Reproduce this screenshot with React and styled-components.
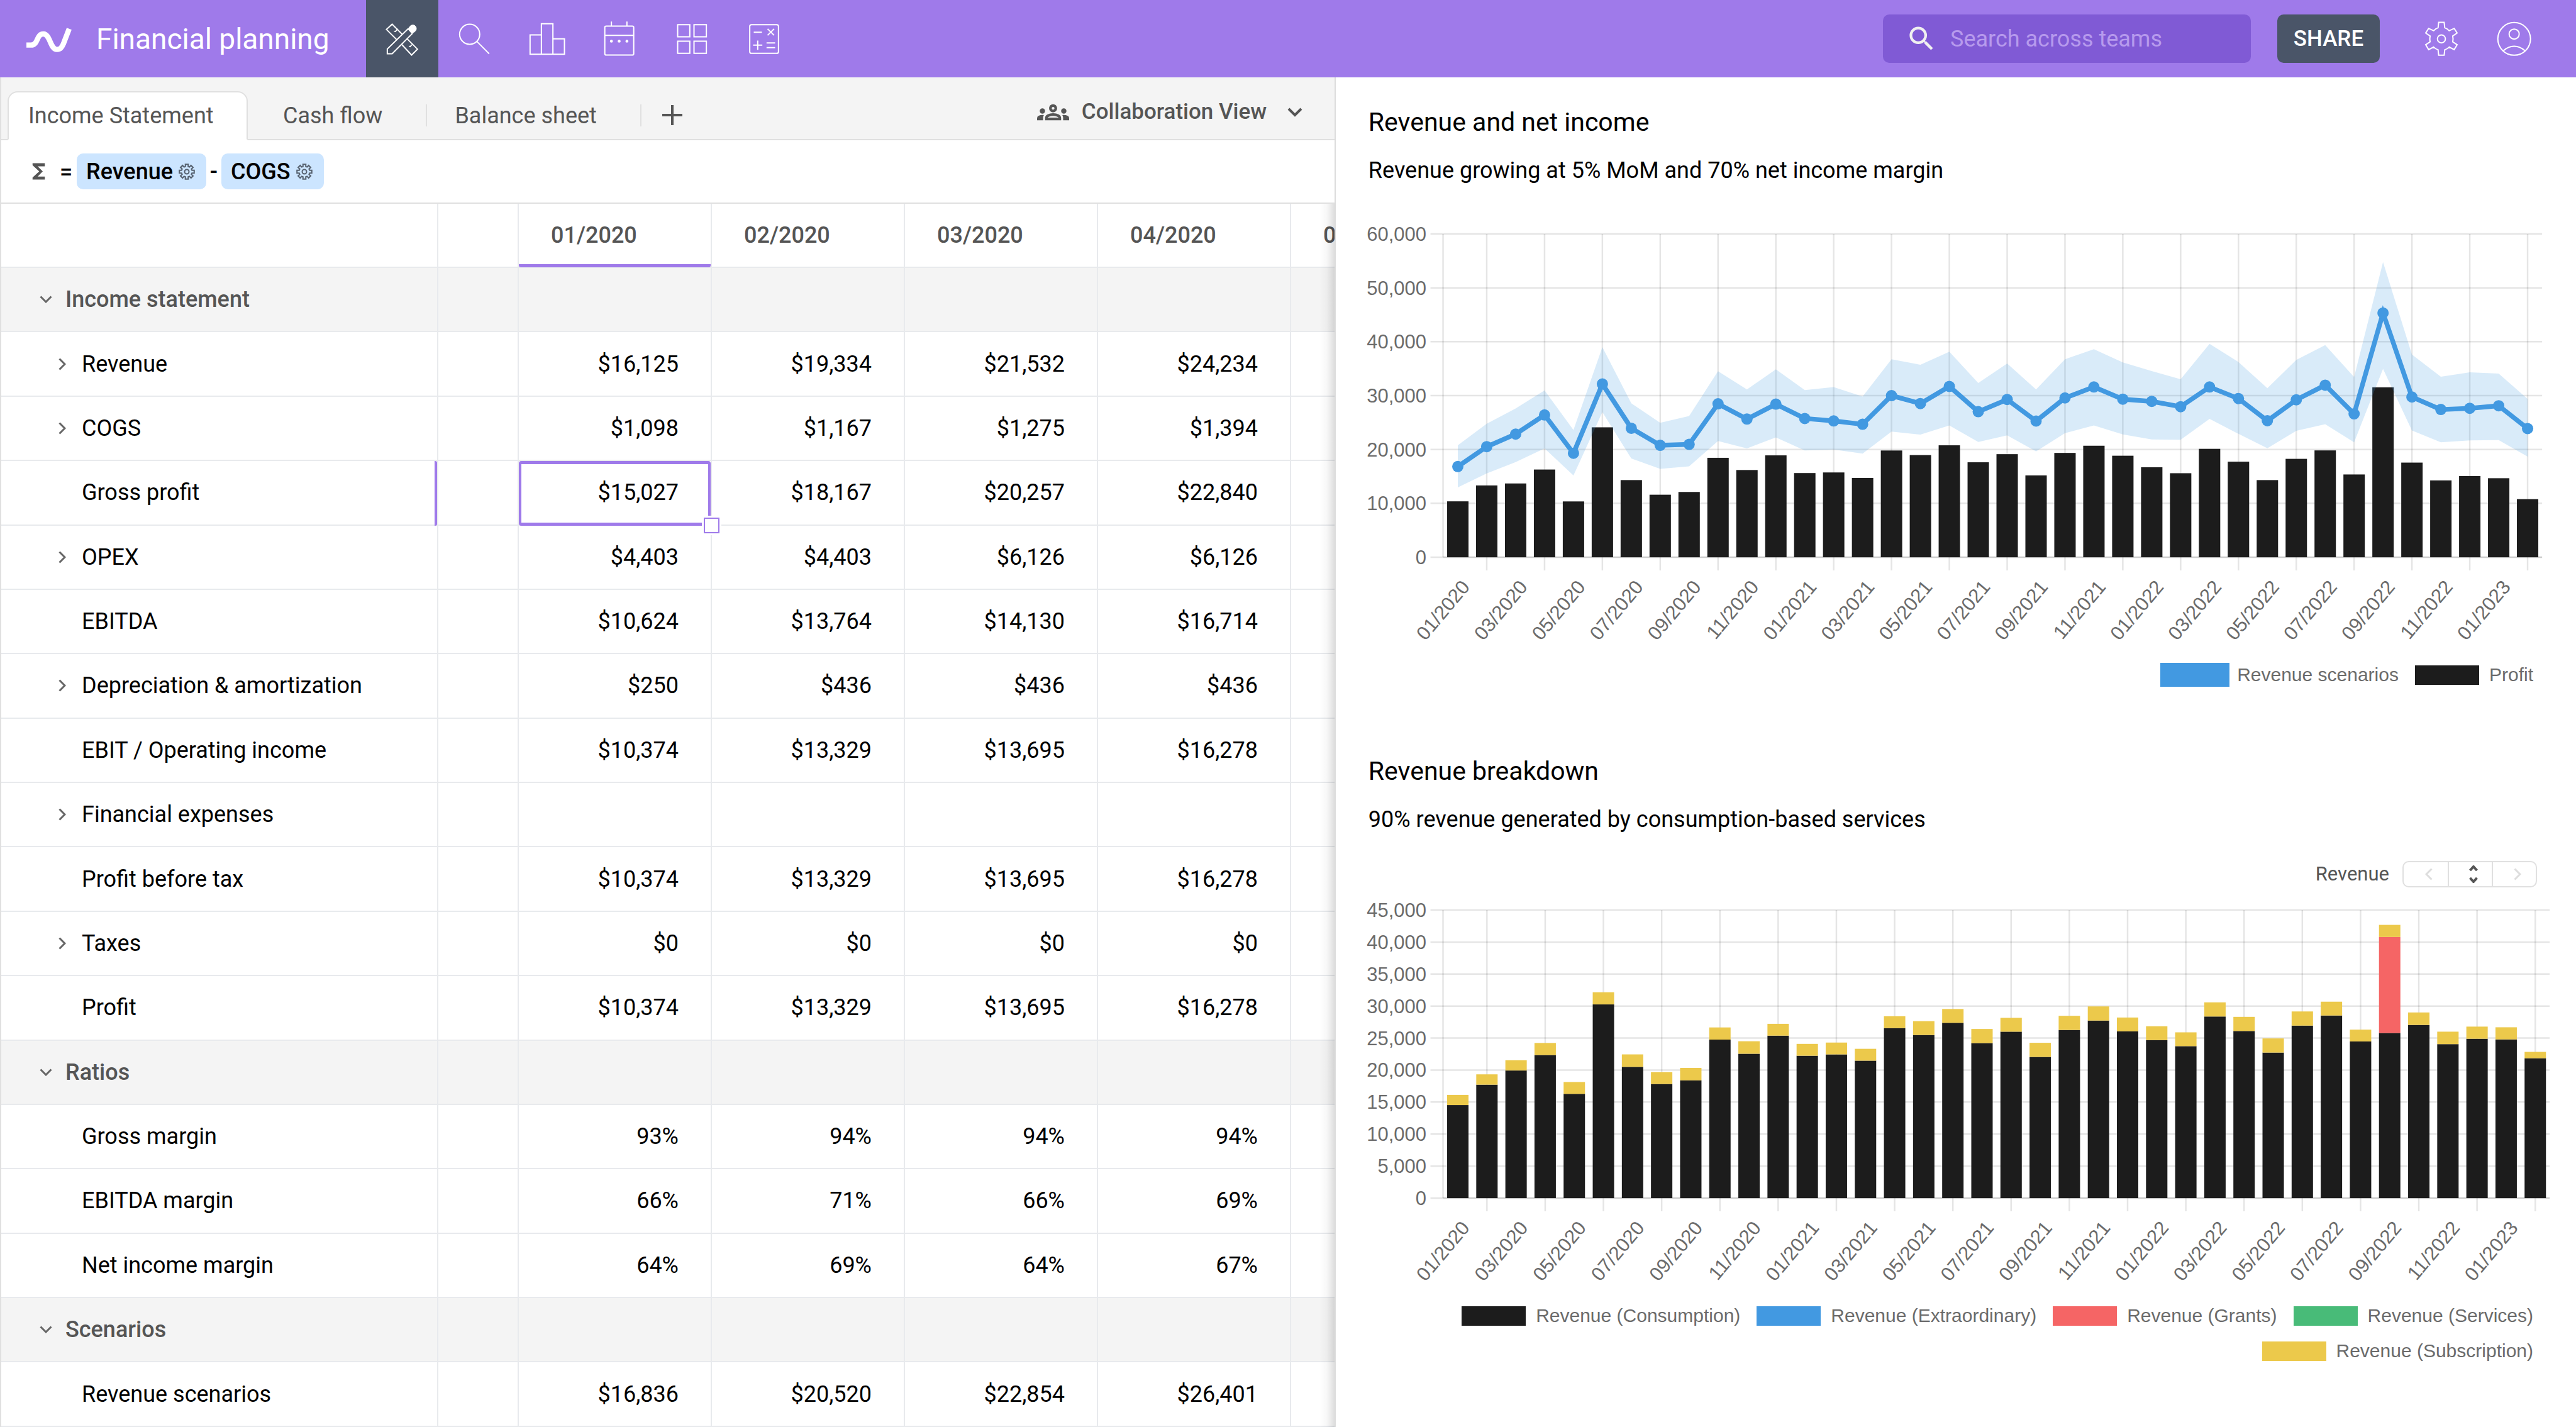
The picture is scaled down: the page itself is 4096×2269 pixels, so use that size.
import React, { useState } from "react";
import styled, { createGlobalStyle, css } from "styled-components";
import { MdFunctions, MdOutlineGroups, MdSearch } from "react-icons/md";

const color = {
  purple: "#9f7aea",
  purpleDark: "#805ad5",
  slate: "#4a5568",
  surface: "#f4f4f4",
  line: "#e0e0e0",
  cellLine: "#e8eaed",
  muted: "#555555",
  chip: "#cce5ff",
  blue: "#4299e1",
  black: "#1c1c1c",
  red: "#f56565",
  green: "#48bb78",
  yellow: "#ecc94b",
  axis: "#6b6b6b",
};

const GlobalStyle = createGlobalStyle`
  *, *::before, *::after { box-sizing: border-box; }
  body { margin: 0; background: #ffffff; }
  button, input, select { font: inherit; color: inherit; border: 0; background: none; padding: 0; margin: 0; }
  button { cursor: pointer; }
  svg { display: block; flex: none; }
`;

/* ---------- page frame ---------- */

const Page = styled.div`
  display: flex;
  flex-direction: column;
  height: 100vh;
  overflow: hidden;
  font-family: Roboto, "Liberation Sans", sans-serif;
  font-size: 36px;
  line-height: 48px;
  color: #000000;
`;

const Columns = styled.main`
  display: grid;
  grid-template-columns: minmax(0, 14fr) minmax(0, 13fr);
  flex: 1;
  min-height: 0;
`;

/* ---------- top bar ---------- */

const TopBar = styled.header`
  display: flex;
  align-items: stretch;
  height: 123px;
  flex: none;
  padding-left: 41px;
  background: ${color.purple};
  color: #ffffff;
`;

const Brand = styled.h1`
  display: flex;
  align-items: center;
  gap: 35px;
  width: 541px;
  margin: 0;
  font-size: 46px;
  font-weight: 400;
  white-space: nowrap;
`;

const Nav = styled.nav`
  display: flex;
`;

const NavButton = styled.button`
  display: flex;
  align-items: center;
  justify-content: center;
  width: 115px;
  background: ${(p) => (p.$active ? color.slate : "transparent")};
`;

const Actions = styled.div`
  display: flex;
  align-items: center;
  margin-left: auto;
  padding-right: 40px;
`;

const SearchBox = styled.label`
  display: flex;
  align-items: center;
  gap: 20px;
  width: 585px;
  height: 77px;
  padding: 0 36px;
  border-radius: 10px;
  background: ${color.purpleDark};
`;

const SearchInput = styled.input`
  flex: 1;
  min-width: 0;
  font-size: 36px;
  outline: 0;
  &::placeholder {
    color: #b79aed;
    opacity: 1;
  }
`;

const ShareButton = styled.button`
  height: 77px;
  width: 163px;
  margin: 0 40px 0 42px;
  border-radius: 10px;
  background: ${color.slate};
  font-size: 35px;
  font-weight: 500;
`;

const IconButton = styled.button`
  display: flex;
  align-items: center;
  justify-content: center;
  width: 116px;
  height: 77px;
`;

/* ---------- sheet panel ---------- */

const Sheet = styled.section`
  display: flex;
  flex-direction: column;
  min-width: 0;
  min-height: 0;
  border-left: 2px solid ${color.line};
  border-right: 2px solid #dcdcdc;
`;

const TabBar = styled.div`
  display: flex;
  align-items: flex-end;
  height: 100px;
  flex: none;
  padding: 0 51px 0 10px;
  border-bottom: 2px solid ${color.line};
  background: ${color.surface};
  color: ${color.muted};
`;

const Tabs = styled.div`
  display: flex;
`;

const Tab = styled.button`
  height: 76px;
  white-space: nowrap;
  ${(p) =>
    p.$active
      ? css`
          width: 382px;
          height: 78px;
          margin: 0 12px -2px 0;
          padding: 0 0 0 31px;
          text-align: left;
          border: 2px solid ${color.line};
          border-bottom-color: #ffffff;
          border-radius: 16px 16px 0 0;
          background: #ffffff;
        `
      : css`
          padding: 2px 71px 0 44px;
          background: linear-gradient(${color.line}, ${color.line}) right center / 2px 35px no-repeat;
        `}
`;

const AddTab = styled.button`
  display: flex;
  align-items: center;
  justify-content: center;
  width: 98px;
  height: 76px;
`;

const ViewPicker = styled.label`
  display: flex;
  align-items: center;
  height: 86px;
  margin-left: auto;
  gap: 20px;
`;

const ViewSelect = styled.select`
  appearance: none;
  outline: 0;
  font-size: 35px;
  font-weight: 500;
  padding-right: 12px;
`;

const FormulaBar = styled.div`
  display: flex;
  align-items: center;
  height: 101px;
  flex: none;
  padding-left: 40px;
  border-bottom: 2px solid ${color.line};
  font-weight: 500;
`;

const Sigma = styled.span`
  display: flex;
  width: 53px;
  color: ${color.muted};
`;

const Operator = styled.span`
  width: ${(p) => (p.$wide ? 27 : 24)}px;
  text-align: ${(p) => (p.$wide ? "left" : "center")};
`;

const Chip = styled.button`
  display: flex;
  align-items: center;
  gap: 9px;
  height: 57px;
  padding: 0 18px 0 15px;
  border-radius: 10px;
  background: ${color.chip};
  font-weight: 500;
`;

const TableArea = styled.div`
  position: relative;
  flex: 1;
  min-height: 0;
  overflow: hidden;
  &::after {
    content: "";
    position: absolute;
    inset: 0 0 0 auto;
    width: 24px;
    background: linear-gradient(to right, rgba(0, 0, 0, 0), rgba(0, 0, 0, 0.03) 50%, rgba(0, 0, 0, 0.13));
    pointer-events: none;
  }
`;

const Table = styled.table`
  table-layout: fixed;
  width: 2358px;
  height: 100%;
  border-collapse: separate;
  border-spacing: 0;
`;

const LabelCol = styled.col`
  width: 695px;
`;
const SpacerCol = styled.col`
  width: 128px;
`;
const MonthCol = styled.col`
  width: 307px;
`;

const cellBase = css`
  position: relative;
  padding: 0 51px;
  border-right: 2px solid ${color.cellLine};
  border-bottom: 2px solid ${color.cellLine};
  font-weight: 400;
  white-space: nowrap;
`;

const Row = styled.tr`
  height: 102px;
  background: ${(p) => (p.$group ? color.surface : "#ffffff")};
`;

const MonthHead = styled.th`
  ${cellBase}
  text-align: left;
  font-weight: 500;
  color: ${color.muted};
  ${(p) =>
    p.$active &&
    css`
      &::after {
        content: "";
        position: absolute;
        inset: auto 0 -1px 0;
        height: 5px;
        border-radius: 0 0 3px 3px;
        background: ${color.purple};
      }
    `}
`;

const RowHead = styled.th`
  ${cellBase}
  padding: 0 0 0 ${(p) => (p.$group ? 54 : 80)}px;
  text-align: left;
  ${(p) =>
    p.$active &&
    css`
      &::after {
        content: "";
        position: absolute;
        inset: 0 0 -2px auto;
        width: 4px;
        border-radius: 0 3px 3px 0;
        background: ${color.purple};
      }
    `}
`;

const RowLabel = styled.span`
  display: flex;
  align-items: center;
  gap: 14px;
  color: ${(p) => (p.$group ? color.muted : "inherit")};
  font-weight: ${(p) => (p.$group ? 500 : 400)};
`;

const ChevronSlot = styled.span`
  display: flex;
  justify-content: center;
  width: 34px;
  color: #666666;
`;

const Cell = styled.td`
  ${cellBase}
  text-align: right;
  ${(p) =>
    p.$active &&
    css`
      &::after {
        content: "";
        position: absolute;
        inset: 0 0 -2px 0;
        border: solid ${color.purple};
        border-width: 5px 4px;
        border-radius: 4px;
      }
    `}
`;

const FillHandle = styled.span`
  position: absolute;
  right: -14px;
  bottom: -14px;
  z-index: 1;
  width: 25px;
  height: 25px;
  border: 2px solid ${color.purple};
  background: #ffffff;
  box-shadow: 0 0 0 3px #ffffff;
`;

/* ---------- report panel ---------- */

const Report = styled.section`
  display: flex;
  flex-direction: column;
  min-width: 0;
  gap: 108px;
  padding: 45px 40px 0 52px;
  overflow: hidden;
`;

const Card = styled.article`
  display: flex;
  flex-direction: column;
`;

const CardTitle = styled.h2`
  margin: 0 0 27px;
  font-size: 41px;
  line-height: 52px;
  font-weight: 400;
`;

const CardText = styled.p`
  margin: 0;
`;

const Stepper = styled.div`
  display: flex;
  align-items: center;
  justify-content: flex-end;
  gap: 21px;
  height: 42px;
  margin: 42px 22px 8px 0;
  font-size: 31px;
  color: ${color.muted};
`;

const StepperButtons = styled.div`
  display: flex;
  border: 2px solid ${color.line};
  border-radius: 10px;
`;

const StepButton = styled.button`
  display: flex;
  flex-direction: column;
  align-items: center;
  justify-content: center;
  gap: 10px;
  width: 70px;
  height: 38px;
  padding-left: 10px;
  color: ${(p) => (p.disabled ? "#dddddd" : color.muted)};
  & + & {
    border-left: 2px solid ${color.line};
  }
`;

const ChartSvg = styled.svg`
  width: 100%;
  height: auto;
  margin-top: ${(p) => p.$gap}px;
  overflow: visible;
  font-family: "Liberation Sans", Arial, sans-serif;
  font-size: 31px;
`;

const Legend = styled.ul`
  display: flex;
  flex-wrap: wrap;
  justify-content: flex-end;
  gap: 18px 26px;
  margin: 18px 28px 0 0;
  padding: 0;
  list-style: none;
  font-family: "Liberation Sans", Arial, sans-serif;
  font-size: 30px;
  line-height: 38px;
  color: ${color.axis};
`;

const LegendItem = styled.li`
  display: flex;
  align-items: center;
  gap: ${(p) => (p.$large ? 12 : 16)}px;
`;

const Swatch = styled.span`
  width: ${(p) => (p.$large ? 110 : 102)}px;
  height: ${(p) => (p.$large ? 38 : 31)}px;
  background: ${(p) => p.$color};
`;

/* ---------- icons ---------- */

const LineIcon = ({ box, size = 56, width = 6, children }) => (
  <svg width={size} height={size} viewBox={box} overflow="visible" fill="none" stroke="currentColor" strokeWidth={width} aria-hidden="true">
    {children}
  </svg>
);

const Logo = () => (
  <svg width="77" height="42" viewBox="123 87 231 126" overflow="visible" fill="none" stroke="#fff" strokeWidth="25" aria-hidden="true">
    <path d="M126 179H148C184 179 172 126 207 126C241 126 238 200 272 200C289 200 295 189 302 174L330 101" />
  </svg>
);

const DesignIcon = () => (
  <LineIcon box="124.5 70.5 168 168">
    <path d="M206 131L159 84L132 109L181 158M231 154L280 203L252 231L204 180" />
    <path d="M186 106L175 118M168 117L178 120M258 178L246 189M239 188L249 192" strokeWidth="5" />
    <path d="M236 105L136 202V225H159L256 128" />
    <path d="M234 107L244 94C253 84 265 86 271 94C277 102 276 111 269 118L254 130Z" fill="currentColor" strokeWidth="2" />
  </LineIcon>
);

const FindIcon = () => (
  <LineIcon box="469.5 70.5 168 168">
    <circle cx="529" cy="132" r="48" />
    <path d="M563 166L622 225" />
  </LineIcon>
);

const BarsIcon = () => (
  <LineIcon box="814.5 70.5 168 168">
    <path d="M817 135H871V227H817ZM871 82H926V227H871ZM926 154H981V227H926Z" />
  </LineIcon>
);

const CalendarIcon = () => (
  <LineIcon box="109.5 70.5 168 168">
    <rect x="123.500" y="93" width="138" height="138" rx="7" />
    <path d="M124 137H261M155 71V93M229 71V93" />
    <g fill="currentColor" stroke="none">
      <circle cx="155" cy="165" r="7" />
      <circle cx="192" cy="165" r="7" />
      <circle cx="229" cy="165" r="7" />
    </g>
  </LineIcon>
);

const TilesIcon = () => (
  <LineIcon box="454.5 70.5 168 168">
    <path d="M471 86H529V144H471ZM549 86H608V144H549ZM471 165H529V223H471ZM549 165H608V223H549Z" />
  </LineIcon>
);

const CalcIcon = () => (
  <LineIcon box="799.5 70.5 168 168">
    <rect x="815" y="86" width="137" height="137" rx="8" />
    <path d="M834 122H873M900 106L931 137M931 106L900 137M831 184H875M853 162V206M895 173H936M895 196H936" />
  </LineIcon>
);

const SettingsIcon = () => (
  <LineIcon box="342 70.500 168 168">
    <path d="M413 75H439L442 101Q454 105 463 115L487 104L501 126L480 140Q483 154 480 168L501 182L487 205L463 193Q454 202 442 206L439 232H413L410 206Q398 202 389 193L365 205L351 182L372 168Q369 154 372 140L351 126L365 104L389 115Q398 105 410 101Z" />
    <circle cx="426" cy="154" r="19" />
  </LineIcon>
);

const AccountIcon = () => (
  <LineIcon box="690 70.500 168 168">
    <circle cx="773" cy="154" r="78" />
    <circle cx="773" cy="131" r="24" />
    <path d="M721 211Q745 189 773 189Q801 189 825 211" />
  </LineIcon>
);

const gearPath = Array.from({ length: 8 }, (_, i) => {
  const at = (r, deg) => {
    const a = ((i * 45 + deg - 90) * Math.PI) / 180;
    return `${(13 + r * Math.cos(a)).toFixed(2)} ${(13 + r * Math.sin(a)).toFixed(2)}`;
  };
  return `${at(8.5, -15)}L${at(12, -11)}L${at(12, 11)}L${at(8.5, 15)}`;
}).join("L");

const GearIcon = () => (
  <svg width="26" height="26" viewBox="0 0 26 26" fill="none" stroke="#56616f" strokeWidth="2" aria-hidden="true">
    <path d={`M${gearPath}Z`} />
    <circle cx="13" cy="13" r="3.500" />
  </svg>
);

const chevrons = {
  down: { w: 20, h: 12, d: "M1.500 1.500L10 10L18.500 1.500" },
  right: { w: 12, h: 20, d: "M1.500 1.500L10 10L1.500 18.500" },
  left: { w: 12, h: 20, d: "M10.500 1.500L2 10L10.500 18.500" },
  up: { w: 14, h: 9, d: "M1.500 8L7 2L12.500 8" },
  tiny: { w: 14, h: 9, d: "M1.500 1L7 7L12.500 1" },
  wide: { w: 24, h: 15, d: "M2 2L12 12L22 2" },
};

const Chevron = ({ to, width = 3 }) => {
  const c = chevrons[to];
  return (
    <svg width={c.w} height={c.h} viewBox={`0 0 ${c.w} ${c.h}`} fill="none" stroke="currentColor" strokeWidth={width} aria-hidden="true">
      <path d={c.d} />
    </svg>
  );
};

const PlusIcon = () => (
  <svg width="32" height="32" viewBox="0 0 32 32" stroke="currentColor" strokeWidth="4" aria-hidden="true">
    <path d="M16 0V32M0 16H32" />
  </svg>
);

/* ---------- data ---------- */

const headMonths = ["01/2020", "02/2020", "03/2020", "04/2020", "05/2020"];

const rows = [
  { label: "Income statement", group: true },
  { label: "Revenue", open: true, values: ["$16,125", "$19,334", "$21,532", "$24,234"] },
  { label: "COGS", open: true, values: ["$1,098", "$1,167", "$1,275", "$1,394"] },
  { label: "Gross profit", active: true, values: ["$15,027", "$18,167", "$20,257", "$22,840"] },
  { label: "OPEX", open: true, values: ["$4,403", "$4,403", "$6,126", "$6,126"] },
  { label: "EBITDA", values: ["$10,624", "$13,764", "$14,130", "$16,714"] },
  { label: "Depreciation & amortization", open: true, values: ["$250", "$436", "$436", "$436"] },
  { label: "EBIT / Operating income", values: ["$10,374", "$13,329", "$13,695", "$16,278"] },
  { label: "Financial expenses", open: true },
  { label: "Profit before tax", values: ["$10,374", "$13,329", "$13,695", "$16,278"] },
  { label: "Taxes", open: true, values: ["$0", "$0", "$0", "$0"] },
  { label: "Profit", values: ["$10,374", "$13,329", "$13,695", "$16,278"] },
  { label: "Ratios", group: true },
  { label: "Gross margin", values: ["93%", "94%", "94%", "94%"] },
  { label: "EBITDA margin", values: ["66%", "71%", "66%", "69%"] },
  { label: "Net income margin", values: ["64%", "69%", "64%", "67%"] },
  { label: "Scenarios", group: true },
  { label: "Revenue scenarios", values: ["$16,836", "$20,520", "$22,854", "$26,401"] },
];

const scenario = [
  16836, 20520, 22854, 26401, 19302, 32151, 23943, 20774, 20943, 28472, 25642, 28415, 25755, 25302, 24679, 30000, 28528, 31698, 27014,
  29275, 25275, 29565, 31594, 29333, 28927, 27942, 31594, 29449, 25333, 29217, 31942, 26609, 45333, 29739, 27420, 27652, 28116, 23884,
];
const scenarioHigh = [
  20774, 24793, 27623, 30963, 23604, 39000, 28585, 24962, 26208, 34528, 31132, 34868, 31019, 31585, 29830, 36736, 35717, 38151, 32347,
  35941, 31130, 36753, 38608, 36173, 34550, 33043, 39594, 36231, 31362, 36637, 39362, 33449, 54782, 37623, 33507, 34318, 34086, 29391,
];
const scenarioLow = [
  12963, 15566, 17661, 20208, 15170, 26943, 18340, 16415, 16868, 21566, 20208, 22245, 19811, 19981, 19245, 23321, 22755, 24453, 21391,
  22609, 19652, 23014, 24464, 22783, 21855, 21797, 25681, 22899, 20232, 23478, 24696, 21333, 34957, 23536, 21333, 21681, 21739, 18667,
];
const profit = [
  10374, 13329, 13695, 16278, 10358, 24113, 14321, 11604, 12113, 18453, 16189, 18906, 15623, 15736, 14717, 19811, 18962, 20774, 17623,
  19130, 15188, 19362, 20695, 18841, 16696, 15594, 20116, 17739, 14319, 18261, 19826, 15362, 31536, 17565, 14261, 15072, 14667, 10783,
];
const consumption = [
  14538, 17723, 19932, 22346, 16284, 30257, 20497, 17826, 18391, 24761, 22552, 25378, 22244, 22449, 21473, 26559, 25480, 27381, 24210,
  26000, 22052, 26263, 27736, 26052, 24683, 23736, 28368, 26104, 22736, 26947, 28525, 24473, 25789, 27052, 24052, 24894, 24789, 21841,
];
const total = [
  16125, 19334, 21532, 24234, 18134, 32158, 22449, 19675, 20343, 26661, 24504, 27226, 24093, 24298, 23322, 28408, 27637, 29538, 26420,
  28157, 24262, 28473, 29946, 28210, 26841, 25894, 30578, 28315, 24946, 29157, 30683, 26315, 42683, 28999, 25999, 26789, 26684, 22841,
];
const grants = total.map((_, i) => (i === 32 ? 14999 : 0));

const monthLabel = (i) => `${String((i % 12) + 1).padStart(2, "0")}/${2020 + Math.floor(i / 12)}`;

/* ---------- charts ---------- */

const PLOT_LEFT = 118.5;

function Axes({ plot, max, step }) {
  const ticks = Array.from({ length: max / step + 1 }, (_, i) => i * step);
  const months = Array.from({ length: 38 }, (_, i) => i);
  return (
    <g>
      <g stroke="#000" strokeOpacity="0.1" strokeWidth="2.500">
        {ticks.map((t) => (
          <line key={t} x1={PLOT_LEFT - 20} x2={plot.right} y1={plot.y(t)} y2={plot.y(t)} />
        ))}
        <line x1={PLOT_LEFT} x2={plot.right} y1={plot.y(0)} y2={plot.y(0)} />
        <line x1={PLOT_LEFT} x2={PLOT_LEFT} y1={plot.y(max)} y2={plot.y(0)} />
        {months
          .filter((i) => i % 2 === 1)
          .map((i) => (
            <line key={i} x1={plot.x(i)} x2={plot.x(i)} y1={plot.y(max)} y2={plot.y(0) + 21} />
          ))}
      </g>
      <g fill={color.axis} textAnchor="end">
        {ticks.map((t) => (
          <text key={t} x="92" y={plot.y(t) + 11}>
            {t.toLocaleString("en-US")}
          </text>
        ))}
        {months
          .filter((i) => i % 2 === 0 && i < 37)
          .map((i) => (
            <text key={i} transform={`translate(${plot.x(i) + 12} ${plot.y(0) + 41}) rotate(-50)`} y="11">
              {monthLabel(i)}
            </text>
          ))}
      </g>
    </g>
  );
}

function makePlot({ top, bottom, right, pitch, max }) {
  return {
    right,
    x: (i) => 142 + i * pitch,
    y: (v) => bottom - (v / max) * (bottom - top),
  };
}

function Bars({ plot, base, values, fill }) {
  return (
    <g fill={fill}>
      {values.map((v, i) => {
        const from = base ? base[i] : 0;
        if (v <= from) return null;
        return <rect key={i} x={plot.x(i) - 17} width="34" y={plot.y(v)} height={plot.y(from) - plot.y(v)} />;
      })}
    </g>
  );
}

function IncomeChart() {
  const plot = makePlot({ top: 29, bottom: 543, right: 1866, pitch: 45.97, max: 60000 });
  const line = (values) => values.map((v, i) => `${plot.x(i)},${plot.y(v)}`);
  const band = [...line(scenarioHigh), ...line(scenarioLow).reverse()].join(" ");
  return (
    <ChartSvg $gap={48} viewBox="0 0 1880 693" role="img" aria-label="Revenue scenarios and profit by month">
      <Axes plot={plot} max={60000} step={10000} />
      <Bars plot={plot} values={profit} fill={color.black} />
      <polygon points={band} fill={color.blue} fillOpacity="0.2" />
      <polyline points={line(scenario).join(" ")} fill="none" stroke={color.blue} strokeWidth="7.500" />
      {scenario.map((v, i) => (
        <circle key={i} cx={plot.x(i)} cy={plot.y(v)} r="9" fill={color.blue} />
      ))}
    </ChartSvg>
  );
}

function BreakdownChart() {
  const plot = makePlot({ top: 28, bottom: 486, right: 1878, pitch: 46.3, max: 45000 });
  const withGrants = consumption.map((v, i) => v + grants[i]);
  return (
    <ChartSvg $gap={0} viewBox="0 0 1880 636" role="img" aria-label="Revenue breakdown by month">
      <Axes plot={plot} max={45000} step={5000} />
      <Bars plot={plot} values={consumption} fill={color.black} />
      <Bars plot={plot} base={consumption} values={withGrants} fill={color.red} />
      <Bars plot={plot} base={withGrants} values={total} fill={color.yellow} />
    </ChartSvg>
  );
}

const breakdownLegend = [
  ["Revenue (Consumption)", color.black],
  ["Revenue (Extraordinary)", color.blue],
  ["Revenue (Grants)", color.red],
  ["Revenue (Services)", color.green],
  ["Revenue (Subscription)", color.yellow],
];

/* ---------- sections ---------- */

const navItems = [
  ["Design", DesignIcon],
  ["Find", FindIcon],
  ["Charts", BarsIcon],
  ["Calendar", CalendarIcon],
  ["Dashboard", TilesIcon],
  ["Formulas", CalcIcon],
];

function Header() {
  return (
    <TopBar>
      <Brand>
        <Logo />
        Financial planning
      </Brand>
      <Nav aria-label="Tools">
        {navItems.map(([label, Icon], i) => (
          <NavButton key={label} aria-label={label} $active={i === 0}>
            <Icon />
          </NavButton>
        ))}
      </Nav>
      <Actions>
        <SearchBox>
          <MdSearch size={51} color="#f0f0f0" />
          <SearchInput type="search" placeholder="Search across teams" aria-label="Search across teams" />
        </SearchBox>
        <ShareButton>SHARE</ShareButton>
        <IconButton aria-label="Settings">
          <SettingsIcon />
        </IconButton>
        <IconButton aria-label="Account">
          <AccountIcon />
        </IconButton>
      </Actions>
    </TopBar>
  );
}

const tabNames = ["Income Statement", "Cash flow", "Balance sheet"];

function SheetTabs() {
  const [active, setActive] = useState(0);
  return (
    <TabBar>
      <Tabs role="tablist">
        {tabNames.map((name, i) => (
          <Tab key={name} role="tab" aria-selected={i === active} $active={i === active} onClick={() => setActive(i)}>
            {name}
          </Tab>
        ))}
      </Tabs>
      <AddTab aria-label="Add sheet">
        <PlusIcon />
      </AddTab>
      <ViewPicker>
        <MdOutlineGroups size={51} />
        <ViewSelect aria-label="View">
          <option>Collaboration View</option>
        </ViewSelect>
        <Chevron to="wide" width={4} />
      </ViewPicker>
    </TabBar>
  );
}

function SheetTable() {
  return (
    <TableArea>
      <Table>
        <colgroup>
          <LabelCol />
          <SpacerCol />
          {headMonths.map((m) => (
            <MonthCol key={m} />
          ))}
        </colgroup>
        <thead>
          <Row>
            <Cell />
            <Cell />
            {headMonths.map((m, i) => (
              <MonthHead key={m} scope="col" $active={i === 0}>
                {m}
              </MonthHead>
            ))}
          </Row>
        </thead>
        <tbody>
          {rows.map((row) => (
            <Row key={row.label} $group={row.group}>
              <RowHead scope="row" $active={row.active} $group={row.group}>
                <RowLabel $group={row.group}>
                  <ChevronSlot>
                    {row.group && <Chevron to="down" />}
                    {row.open && <Chevron to="right" />}
                  </ChevronSlot>
                  {row.label}
                </RowLabel>
              </RowHead>
              <Cell />
              {headMonths.map((m, i) => (
                <Cell key={m} $active={row.active && i === 0}>
                  {row.values?.[i]}
                  {row.active && i === 0 && <FillHandle />}
                </Cell>
              ))}
            </Row>
          ))}
        </tbody>
      </Table>
    </TableArea>
  );
}

export default function App() {
  return (
    <Page>
      <GlobalStyle />
      <Header />
      <Columns>
        <Sheet>
          <SheetTabs />
          <FormulaBar>
            <Sigma>
              <MdFunctions size={39} />
            </Sigma>
            <Operator $wide>=</Operator>
            <Chip>
              Revenue
              <GearIcon />
            </Chip>
            <Operator>-</Operator>
            <Chip>
              COGS
              <GearIcon />
            </Chip>
          </FormulaBar>
          <SheetTable />
        </Sheet>
        <Report>
          <Card>
            <CardTitle>Revenue and net income</CardTitle>
            <CardText>Revenue growing at 5% MoM and 70% net income margin</CardText>
            <IncomeChart />
            <Legend>
              <LegendItem $large>
                <Swatch $large $color={color.blue} />
                Revenue scenarios
              </LegendItem>
              <LegendItem>
                <Swatch $color={color.black} />
                Profit
              </LegendItem>
            </Legend>
          </Card>
          <Card>
            <CardTitle>Revenue breakdown</CardTitle>
            <CardText>90% revenue generated by consumption-based services</CardText>
            <Stepper role="group" aria-label="Revenue level">
              Revenue
              <StepperButtons>
                <StepButton disabled aria-label="Previous">
                  <Chevron to="left" />
                </StepButton>
                <StepButton aria-label="Choose">
                  <Chevron to="up" width={4} />
                  <Chevron to="tiny" width={4} />
                </StepButton>
                <StepButton disabled aria-label="Next">
                  <Chevron to="right" />
                </StepButton>
              </StepperButtons>
            </Stepper>
            <BreakdownChart />
            <Legend>
              {breakdownLegend.map(([label, fill]) => (
                <LegendItem key={label}>
                  <Swatch $color={fill} />
                  {label}
                </LegendItem>
              ))}
            </Legend>
          </Card>
        </Report>
      </Columns>
    </Page>
  );
}
